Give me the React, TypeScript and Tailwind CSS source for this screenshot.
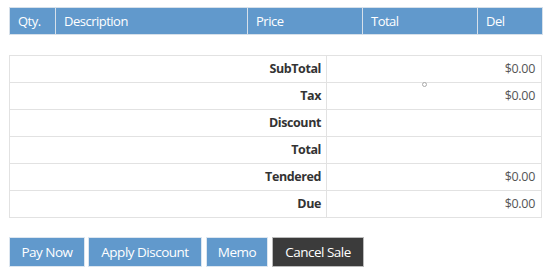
const headers = [
  { label: "Qty.", w: "w-[46px]" },
  { label: "Description", w: "w-[192px]" },
  { label: "Price", w: "w-[115px]" },
  { label: "Total", w: "w-[115px]" },
  { label: "Del", w: "w-[65px]" },
];

const totals = [
  { label: "SubTotal", value: "$0.00" },
  { label: "Tax", value: "$0.00" },
  { label: "Discount", value: "" },
  { label: "Total", value: "" },
  { label: "Tendered", value: "$0.00" },
  { label: "Due", value: "$0.00" },
];

const App = () => {
  return (
    <div className="relative min-h-[279px] bg-white px-[9px] pt-[7px] font-['Open_Sans',sans-serif] text-[13px]">
      <table className="w-[533px] table-fixed border-collapse">
        <thead>
          <tr className="h-[27px] bg-[#6199cc] text-white">
            {headers.map((h) => (
              <th
                key={h.label}
                className={`${h.w} border border-[#d6e0ea] px-[8px] pt-[1px] text-left text-[13px] font-normal tracking-[-0.5px]`}
              >
                {h.label}
              </th>
            ))}
          </tr>
        </thead>
      </table>

      <table className="mt-[20px] w-[533px] table-fixed border-collapse">
        <tbody>
          {totals.map((t) => (
            <tr key={t.label} className="h-[27px]">
              <td className="w-[317px] border border-[#e2e2e2] px-[5px] text-right text-[12.5px] font-bold tracking-[-0.4px] text-[#333]">
                {t.label}
              </td>
              <td className="border border-[#e2e2e2] px-[6px] text-right text-[12.5px] tracking-[-0.3px] text-[#555]">
                {t.value}
              </td>
            </tr>
          ))}
        </tbody>
      </table>

      <div className="mt-[19px] flex items-start text-[13.5px] tracking-[-0.5px]">
        <button className="mr-[3px] h-[30px] w-[76px] border border-[#dce6f0] bg-[#6199cc] text-white">
          Pay Now
        </button>
        <button className="mr-[4px] h-[30px] w-[114px] border border-[#dce6f0] bg-[#6199cc] text-white">
          Apply Discount
        </button>
        <button className="mr-[4px] h-[30px] w-[62px] border border-[#dce6f0] bg-[#6199cc] text-white">
          Memo
        </button>
        <button className="h-[30px] w-[92px] border border-[#bbbbbb] bg-[#3b3b3b] text-white">
          Cancel Sale
        </button>
      </div>

      <div className="absolute left-[422px] top-[82px] h-[5px] w-[5px] rounded-full border border-[#aaaaaa]" />
    </div>
  );
};

export default App;
